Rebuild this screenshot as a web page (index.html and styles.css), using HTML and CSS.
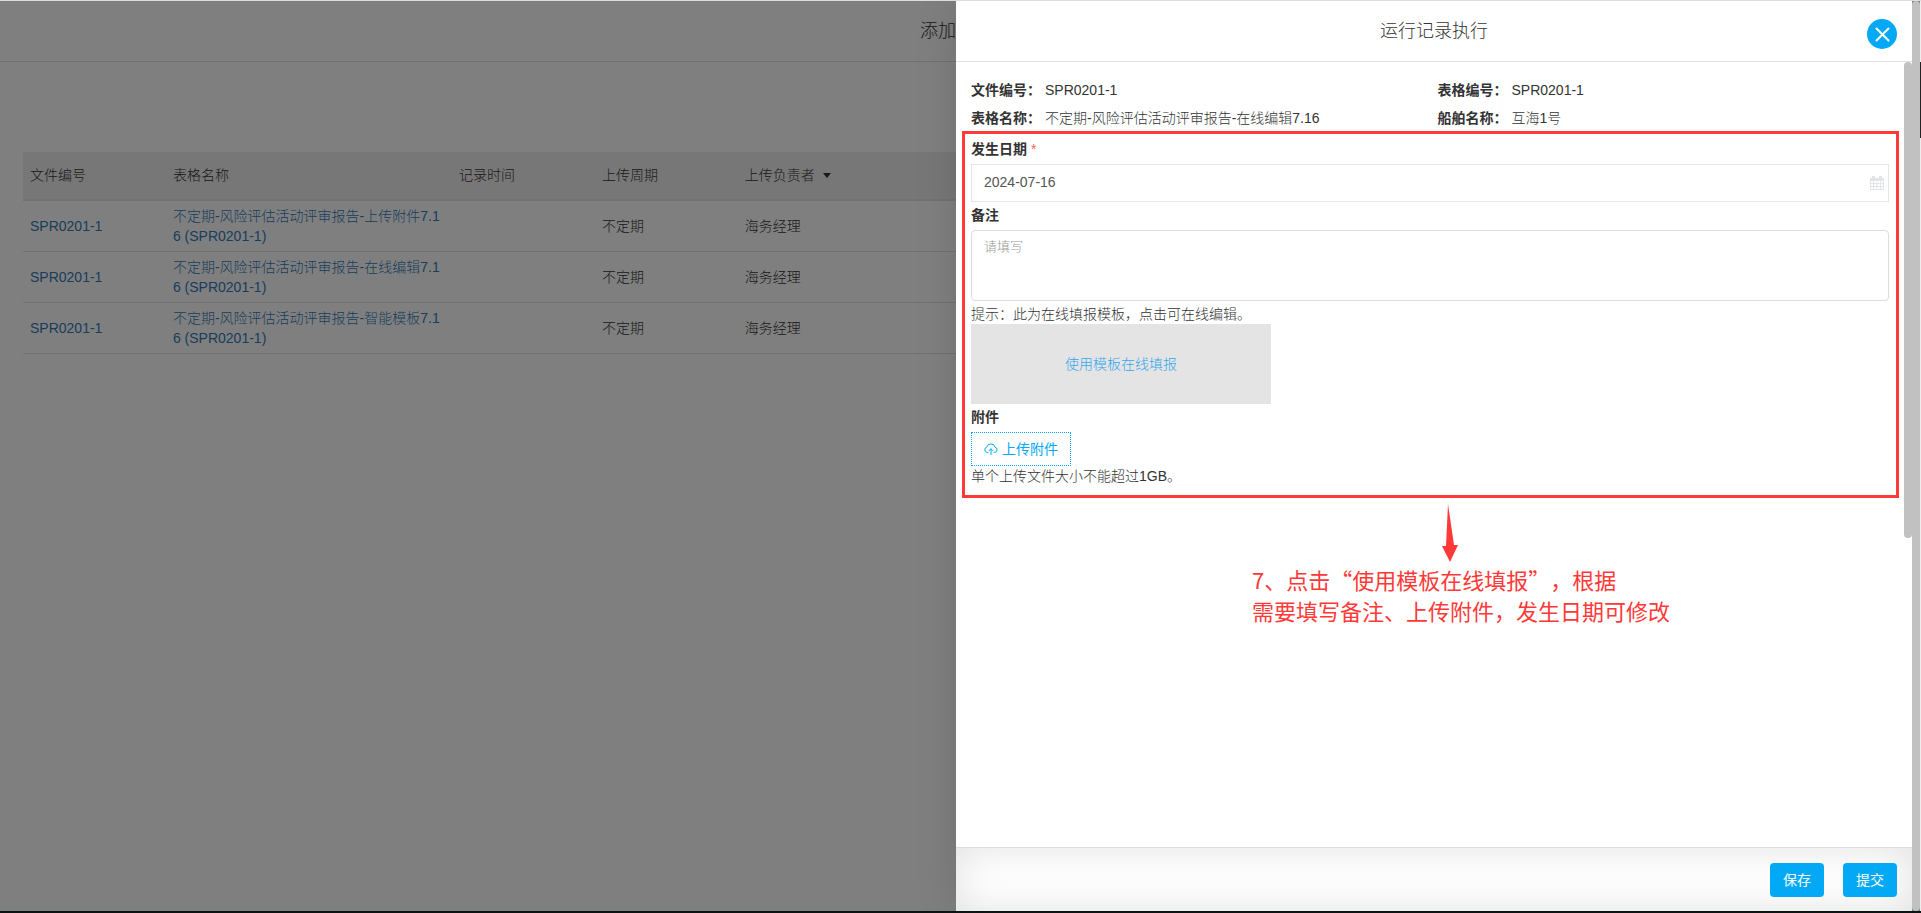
FILE: index.html
```html
<!DOCTYPE html>
<html lang="zh-CN">
<head>
<meta charset="utf-8">
<title>运行记录执行</title>
<link rel="stylesheet" href="styles.css">
</head>
<body>
<div class="app">
  <main class="page">
    <header class="bar"><h1 class="bar-title page-title">添加</h1></header>
    <div class="table-wrap">
      <table class="records">
        <colgroup><col class="c1"><col class="c2"><col class="c1"><col class="c1"><col class="c1"><col></colgroup>
        <thead>
          <tr><th>文件编号</th><th>表格名称</th><th>记录时间</th><th>上传周期</th><th>上传负责者 <span class="caret"></span></th><th></th></tr>
        </thead>
        <tbody>
          <tr><td><a href="#">SPR0201-1</a></td><td><a href="#">不定期-风险评估活动评审报告-上传附件7.16 (SPR0201-1)</a></td><td></td><td>不定期</td><td>海务经理</td><td></td></tr>
          <tr><td><a href="#">SPR0201-1</a></td><td><a href="#">不定期-风险评估活动评审报告-在线编辑7.16 (SPR0201-1)</a></td><td></td><td>不定期</td><td>海务经理</td><td></td></tr>
          <tr><td><a href="#">SPR0201-1</a></td><td><a href="#">不定期-风险评估活动评审报告-智能模板7.16 (SPR0201-1)</a></td><td></td><td>不定期</td><td>海务经理</td><td></td></tr>
        </tbody>
      </table>
    </div>
  </main>

  <div class="overlay">
    <section class="drawer" role="dialog" aria-labelledby="drawer-title">
      <header class="bar">
        <h2 class="bar-title" id="drawer-title">运行记录执行</h2>
        <button class="close" type="button" aria-label="关闭">
          <svg width="30" height="30" viewBox="0 0 30 30"><path d="M9.5 9.5l12 12M21.5 9.5l-12 12" fill="none" stroke="#fff" stroke-width="2" stroke-linecap="round"/></svg>
        </button>
      </header>

      <div class="scroll-area">
        <form class="content" id="record-form">
          <dl class="info">
            <div class="pair"><dt>文件编号：</dt><dd>SPR0201-1</dd></div>
            <div class="pair"><dt>表格编号：</dt><dd>SPR0201-1</dd></div>
            <div class="pair"><dt>表格名称：</dt><dd>不定期-风险评估活动评审报告-在线编辑7.16</dd></div>
            <div class="pair"><dt>船舶名称：</dt><dd>互海1号</dd></div>
          </dl>

          <div class="frame">
            <label class="label" for="date">发生日期 <span class="required">*</span></label>
            <div class="date-box">
              <input class="date" id="date" type="text" value="2024-07-16">
              <svg class="calendar" width="14" height="14" viewBox="0 0 14 14">
                <path d="M0 2h14v12H0z" fill="#e1e5e8"/>
                <path d="M2 0h3v3H2zM9 0h3v3H9z" fill="#e1e5e8"/>
                <path d="M1 5h2v2H1zM4 5h2.5v2H4zM7.5 5H10v2H7.500zM11 5h2v2h-2zM1 8h2v2H1zM4 8h2.500v2H4zM7.500 8H10v2H7.500zM11 8h2v2h-2zM1 11h2v2H1zM4 11h2.500v2H4zM7.500 11H10v2H7.500zM11 11h2v2h-2z" fill="#fff"/>
              </svg>
            </div>
            <label class="label" for="remark">备注</label>
            <textarea class="remark" id="remark" placeholder="请填写"></textarea>
            <p class="hint hint-template">提示：此为在线填报模板，点击可在线编辑。</p>
            <a class="template" href="#">使用模板在线填报</a>
            <label class="label" for="upload">附件</label>
            <button class="upload" id="upload" type="button">
              <svg width="14" height="12" viewBox="0 0 14 12" fill="none" stroke="currentColor" stroke-linecap="round" stroke-linejoin="round"><path d="M4 9.500H3.200A2.700 2.700 0 0 1 2.800 4.200 4.200 4.200 0 0 1 11 4.200a2.700 2.700 0 0 1-.3 5.300H10"/><path d="M7 11.500V6M5.200 7.600L7 5.800l1.800 1.800"/></svg>
              上传附件
            </button>
            <p class="hint">单个上传文件大小不能超过1GB。</p>
          </div>

          <div class="callout">
            <svg class="arrow" width="18" height="58" viewBox="0 0 18 58"><path d="M7 0L13 41H17L9 58L1 42H5z" fill="#ff3838"/></svg>
            <p class="callout-text">7、点击“使用模板在线填报”，根据<br>需要填写备注、上传附件，发生日期可修改</p>
          </div>
        </form>
        <div class="track"><div class="thumb thumb-inner"></div></div>
      </div>

      <footer class="actions">
        <button class="btn" type="submit" form="record-form">保存</button>
        <button class="btn" type="submit" form="record-form">提交</button>
      </footer>
    </section>
  </div>
  <div class="track track-outer"><div class="thumb"></div></div>
  <div class="edge"><div class="edge-dark"></div></div>
</div>
</body>
</html>
```
FILE: styles.css
```css
* { box-sizing: border-box; }

body {
  margin: 0;
  font: 14px/20px "Liberation Sans", "Noto Sans CJK SC", sans-serif;
  color: #333;
  background: #fff;
}

h1, h2, p, dl, dd { margin: 0; }
a { text-decoration: none; }
button, input, textarea { font: inherit; margin: 0; }

.app {
  position: relative;
  height: 100vh;
  display: grid;
  grid-template-columns: minmax(0, 1fr) 8px 1px;
  border-top: 1px solid #ddd;
  border-bottom: 2px solid #0b1413;
  overflow: hidden;
}

.page, .overlay { grid-area: 1 / 1; min-width: 0; min-height: 0; }

.bar {
  position: relative;
  display: flex;
  flex: none;
  justify-content: center;
  align-items: center;
  height: 61px;
  border-bottom: 1px solid #e0e0e0;
}

.bar-title { font-size: 18px; line-height: 26px; font-weight: 300; }
.page-title { width: 4em; }

.table-wrap { padding: 90px 23px 0; }

.records { width: 100%; table-layout: fixed; border-collapse: separate; border-spacing: 0; }
.c1 { width: 7.66%; }
.c2 { width: 15.33%; }
.records th {
  height: 49px;
  padding: 0 7px 2px;
  text-align: left;
  font-weight: 300;
  background: #eee;
  border-bottom: 2px solid #e2e2e2;
}
.records td {
  height: 51px;
  padding: 5px 7px;
  word-break: break-all;
  border-bottom: 1px solid #e2e2e2;
  font-weight: 300;
}
.records a { color: #337ab7; }

.caret {
  display: inline-block;
  margin-left: 4px;
  vertical-align: middle;
  border: 4px solid transparent;
  border-top: 5px solid #333;
  border-bottom: 0;
}

.overlay { z-index: 1; display: flex; justify-content: flex-end; overflow: hidden; background: rgba(0, 0, 0, .5); }

.drawer {
  display: flex;
  flex-direction: column;
  width: 50%;
  background: #fff;
  box-shadow: 0 0 40px rgba(0, 0, 0, .12);
}

.close {
  position: absolute;
  top: 18px;
  right: 15px;
  width: 30px;
  height: 30px;
  padding: 0;
  border: 0;
  border-radius: 50%;
  background: #03a9f4;
}
.close svg { display: block; }

.scroll-area { display: flex; flex: 1; min-height: 0; }
.content { flex: 1; min-width: 0; padding: 18px 0 0 6px; }

.info { display: grid; grid-template-columns: 1fr 1fr; row-gap: 8px; padding: 0 0 3px 9px; }
.pair { display: flex; gap: 4px; }
.pair dt { font-weight: 700; }
.pair dd { font-weight: 300; }

.frame { margin-right: 5px; padding: 2px 7px 9px 6px; border: 3px solid #ff3838; }

.label { display: block; padding: 3px 0 5px; font-weight: 700; }
.required { color: #f56954; font-weight: 400; }

.date-box { position: relative; }
.date {
  display: block;
  width: 100%;
  height: 38px;
  padding: 0 36px 2px 12px;
  border: 1px solid #e6e6e6;
  color: #555;
}
.calendar { position: absolute; top: 12px; right: 5px; }

.remark {
  display: block;
  width: 100%;
  height: 71px;
  padding: 6px 12px;
  border: 1px solid #ddd;
  border-radius: 4px;
  resize: none;
  font-size: 13px;
}
.remark::placeholder { color: #999; font-weight: 300; }

.hint { font-weight: 300; }
.hint-template { padding-top: 3px; }

.template {
  display: flex;
  width: 300px;
  height: 80px;
  align-items: center;
  justify-content: center;
  background: #e4e4e4;
  color: #34a6ee;
  font-weight: 300;
}

.upload {
  display: flex;
  align-items: center;
  justify-content: center;
  gap: 4px;
  width: 100px;
  height: 34px;
  padding: 0;
  border: 1px dotted #03a9f4;
  background: #fff;
  color: #03a9f4;
}

.callout { width: 418px; margin: 6px 0 0 290px; color: #ff3838; }
.arrow { display: block; margin-left: 189px; }
.callout-text {
  padding-top: 2px;
  font: 22px/31px "Noto Sans CJK SC", sans-serif;
  text-spacing-trim: space-all;
  white-space: nowrap;
}

.track { flex: none; width: 8px; }
.thumb { height: 100%; border-radius: 4px; background: #c1c1c1; }
.thumb-inner { height: 60.7%; }
.track-outer { background: #7d8184; }

.edge { background: #eee; padding-top: 61px; }
.edge-dark { height: 76px; background: #222; }

.actions {
  display: flex;
  flex: none;
  justify-content: flex-end;
  gap: 19px;
  padding: 15px 15px 14px;
  border-top: 1px solid #ddd;
  box-shadow: inset 0 0 40px rgba(0, 0, 0, .12);
}
.btn { width: 54px; height: 34px; padding: 0; border: 0; border-radius: 4px; background: #03a9f4; color: #fff; }
```
